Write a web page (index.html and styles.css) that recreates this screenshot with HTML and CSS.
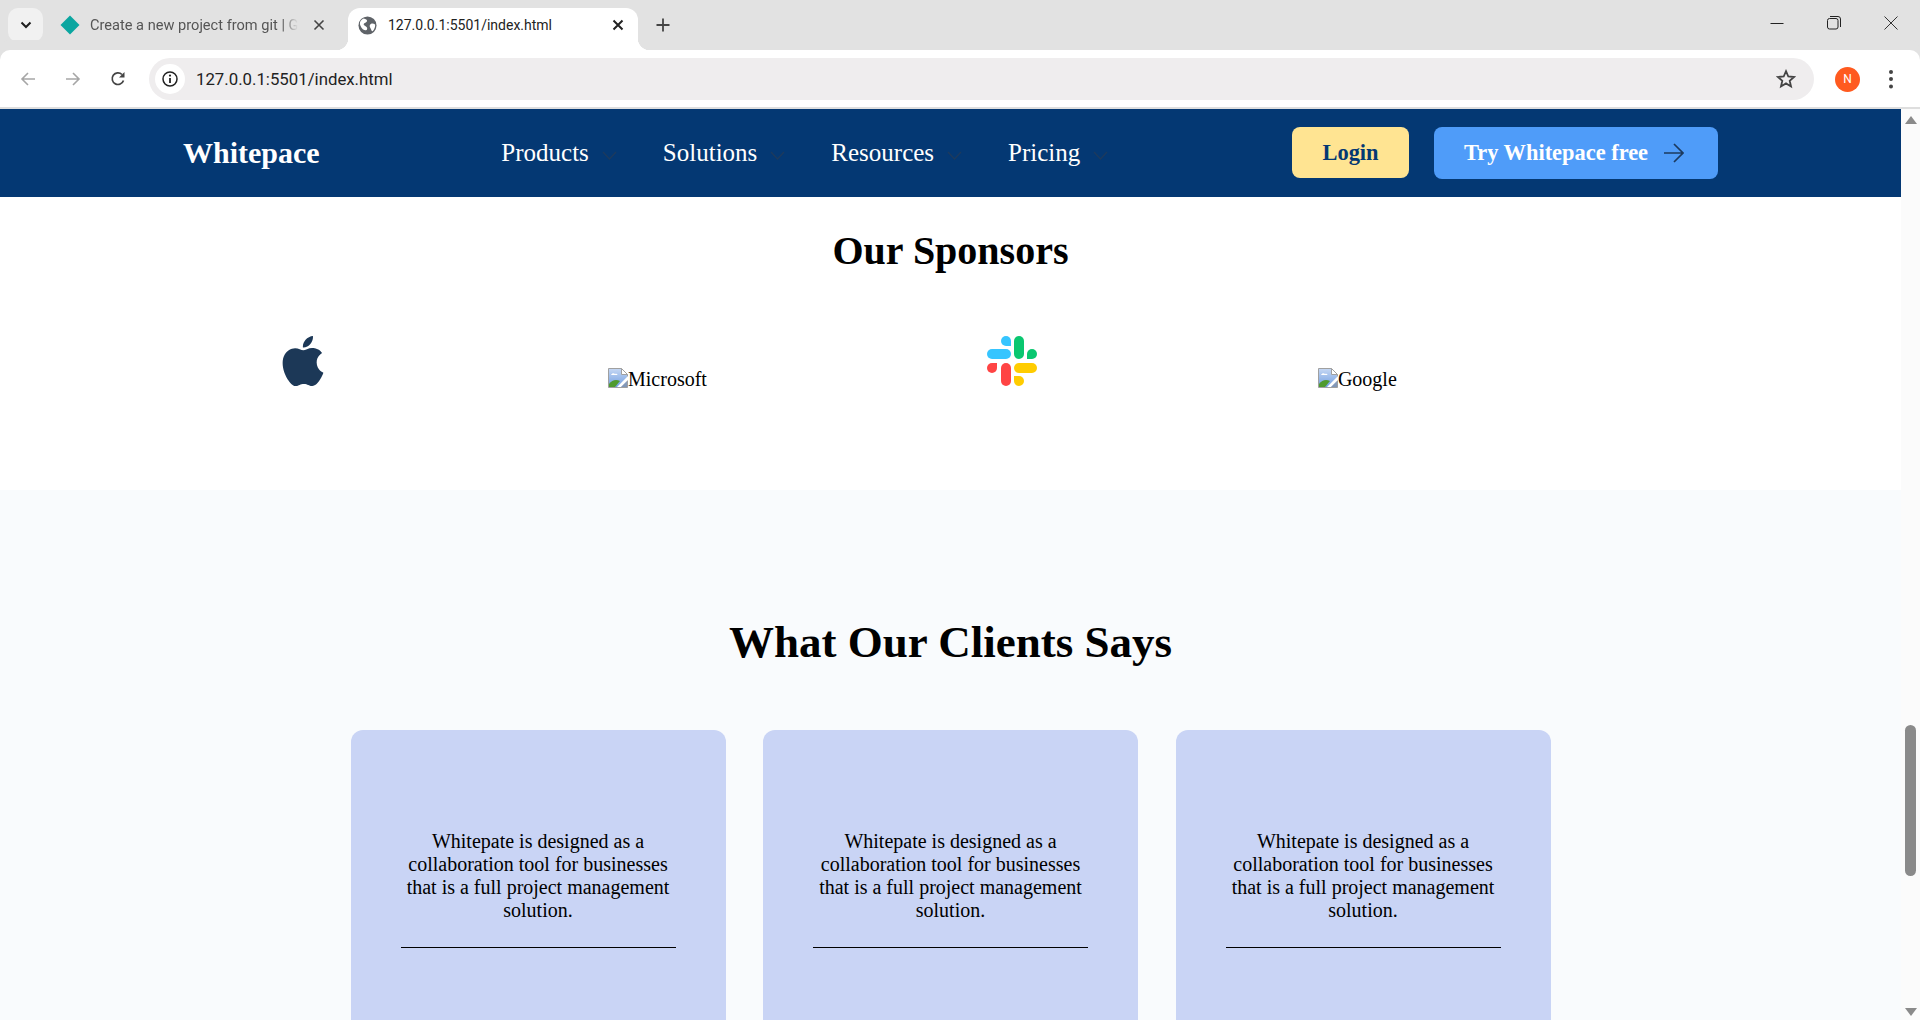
FILE: index.html
```html
<!DOCTYPE html>
<html lang="en">
<head>
    <meta charset="UTF-8">
    <title>Whitepace</title>
    <link rel="stylesheet" href="styles.css">
</head>
<body>
    <div class="tabstrip">
        <div class="tab-search">
            <svg width="12" height="8" viewBox="0 0 12 8"><path d="M1.5 1.5 6 6l4.5-4.5" fill="none" stroke="#1f1f1f" stroke-width="2"/></svg>
        </div>
        <div class="tab">
            <svg class="favicon" width="20" height="20" viewBox="0 0 20 20"><path d="M10 0.5 19.5 10 10 19.5 0.5 10z" fill="#0aa6a0"/></svg>
            <span class="tab-title tab-title-faded">Create a new project from git | G</span>
            <svg class="tab-close" width="12" height="12" viewBox="0 0 12 12"><path d="M1.5 1.5l9 9M10.5 1.5l-9 9" stroke="#444" stroke-width="1.6"/></svg>
        </div>
        <div class="tab tab-active">
            <svg class="favicon" width="19" height="19" viewBox="0 0 20 20"><circle cx="10" cy="10" r="9.5" fill="#5f6368"/><path d="M6 2.5c2 .5 4 1.5 3.5 3S6.5 7 6 8.500 8 10.500 9 11.500s1 3-.5 3.500S4 14 2.500 10 3.500 3.500 6 2.500zM18 9c-1.500-1-3-1.500-4.500-.5s-1.500 2.500-.5 4 1 3 2 3.500 3.500-4 3-7z" fill="#fff"/></svg>
            <span class="tab-title">127.0.0.1:5501/index.html</span>
            <svg class="tab-close" width="12" height="12" viewBox="0 0 12 12"><path d="M1.500 1.500l9 9M10.500 1.500l-9 9" stroke="#222" stroke-width="2"/></svg>
        </div>
        <svg class="new-tab" width="14" height="14" viewBox="0 0 14 14"><path d="M7 0.500v13M0.500 7h13" stroke="#444" stroke-width="1.800"/></svg>
        <div class="win-controls">
            <svg width="14" height="14" viewBox="0 0 14 14"><path d="M0.500 7.500h13" stroke="#222" stroke-width="1"/></svg>
            <svg width="14" height="14" viewBox="0 0 14 14"><rect x="0.500" y="2.500" width="10.500" height="10.500" rx="2" fill="none" stroke="#222"/><path d="M3 0.500h8a2.500 2.500 0 0 1 2.500 2.500v8" fill="none" stroke="#222"/></svg>
            <svg width="14" height="14" viewBox="0 0 14 14"><path d="M0.500 0.500l13 13M13.500 0.500l-13 13" stroke="#333" stroke-width="1"/></svg>
        </div>
    </div>

    <div class="toolbar">
        <svg class="tool-icon" width="16" height="16" viewBox="0 0 16 16"><path d="M15 8H2M8 2 2 8l6 6" fill="none" stroke="#a6a6a6" stroke-width="1.600"/></svg>
        <svg class="tool-icon" width="16" height="16" viewBox="0 0 16 16"><path d="M1 8h13M8 2l6 6-6 6" fill="none" stroke="#a6a6a6" stroke-width="1.600"/></svg>
        <svg class="tool-icon" width="16" height="16" viewBox="0 0 16 16"><path d="M13.500 9.500A5.800 5.800 0 1 1 12 3.500" fill="none" stroke="#444" stroke-width="1.700"/><path d="M14.500 1v5.500H9z" fill="#444"/></svg>
        <div class="omnibox">
            <span class="site-info">
                <svg width="16" height="16" viewBox="0 0 16 16"><circle cx="8" cy="8" r="7" fill="none" stroke="#222" stroke-width="1.500"/><path d="M8 7v5" stroke="#222" stroke-width="1.800"/><circle cx="8" cy="4.600" r="1.100" fill="#222"/></svg>
            </span>
            <span class="url">127.0.0.1:5501/index.html</span>
            <svg class="star" width="20" height="20" viewBox="0 0 20 20"><path d="M10 2.200l2.300 5.300 5.700.5-4.300 3.800 1.300 5.600-5-3-5 3 1.300-5.600L2 8l5.700-.5z" fill="none" stroke="#444" stroke-width="1.800"/></svg>
        </div>
        <span class="avatar">N</span>
        <svg class="kebab" width="6" height="20" viewBox="0 0 6 20"><circle cx="3" cy="3" r="2" fill="#444"/><circle cx="3" cy="10" r="2" fill="#444"/><circle cx="3" cy="17.500" r="2" fill="#444"/></svg>
    </div>

    <div class="viewport">
        <main class="page">
            <header class="navbar">
                <a class="logo">Whitepace</a>
                <nav class="nav-links">
                    <a class="nav-link">Products<svg class="chevron" width="15" height="9" viewBox="0 0 15 9"><path d="M1 1l6.500 7L14 1" fill="none" stroke="#1c3a5e" stroke-width="1.500"/></svg></a>
                    <a class="nav-link">Solutions<svg class="chevron" width="15" height="9" viewBox="0 0 15 9"><path d="M1 1l6.500 7L14 1" fill="none" stroke="#1c3a5e" stroke-width="1.500"/></svg></a>
                    <a class="nav-link">Resources<svg class="chevron" width="15" height="9" viewBox="0 0 15 9"><path d="M1 1l6.500 7L14 1" fill="none" stroke="#1c3a5e" stroke-width="1.500"/></svg></a>
                    <a class="nav-link">Pricing<svg class="chevron" width="15" height="9" viewBox="0 0 15 9"><path d="M1 1l6.500 7L14 1" fill="none" stroke="#1c3a5e" stroke-width="1.500"/></svg></a>
                </nav>
                <div class="nav-actions">
                    <button class="btn btn-login">Login</button>
                    <button class="btn btn-try">Try Whitepace free
                        <svg width="20" height="20" viewBox="0 0 20 20"><path d="M0 10h19M10 1l9 9-9 9" fill="none" stroke="#1c3a5e" stroke-width="1.700"/></svg>
                    </button>
                </div>
            </header>

            <section class="sponsors">
                <h2 class="sponsors-title">Our Sponsors</h2>
                <div class="sponsor-row">
                    <svg class="sponsor-logo" width="50" height="50" viewBox="0 0 24 24"><path fill="#1c3857" d="M12.152 6.896c-.948 0-2.415-1.078-3.960-1.040-2.040.027-3.910 1.183-4.961 3.014-2.117 3.675-.546 9.103 1.519 12.090 1.013 1.454 2.208 3.090 3.792 3.039 1.520-.065 2.090-.987 3.935-.987 1.831 0 2.350.987 3.960.948 1.637-.026 2.676-1.480 3.676-2.948 1.156-1.688 1.636-3.325 1.662-3.415-.039-.013-3.182-1.221-3.220-4.857-.026-3.040 2.480-4.494 2.597-4.559-1.429-2.090-3.623-2.324-4.390-2.376-2-.156-3.675 1.090-4.610 1.090zM15.530 3.830c.843-1.012 1.400-2.427 1.245-3.830-1.207.052-2.662.805-3.532 1.818-.780.896-1.454 2.338-1.273 3.714 1.338.104 2.715-.688 3.559-1.701"/></svg>
                    <span class="sponsor-alt">
                        <svg width="20" height="20" viewBox="0 0 20 20"><use href="#broken-img"/></svg>Microsoft
                    </span>
                    <svg class="sponsor-logo" width="50" height="50" viewBox="0 0 50 50">
                        <rect x="0" y="13" width="24" height="10" rx="5" fill="#36c5ff"/>
                        <path d="M24 10h-5a5 5 0 1 1 5-5z" fill="#36c5ff"/>
                        <rect x="27" y="0" width="10" height="23" rx="5" fill="#0ac770"/>
                        <path d="M40 23v-5a5 5 0 1 1 5 5z" fill="#0ac770"/>
                        <rect x="14" y="27" width="10" height="23" rx="5" fill="#ff4444"/>
                        <path d="M10 27v5a5 5 0 1 1-5-5z" fill="#ff4444"/>
                        <rect x="27" y="27" width="23" height="10" rx="5" fill="#ffcc00"/>
                        <path d="M27 40h5a5 5 0 1 1-5 5z" fill="#ffcc00"/>
                    </svg>
                    <span class="sponsor-alt sponsor-alt-last">
                        <svg width="20" height="20" viewBox="0 0 20 20"><use href="#broken-img"/></svg>Google
                    </span>
                </div>
            </section>

            <section class="clients">
                <h2 class="clients-title">What Our Clients Says</h2>
                <div class="client-grid">
                    <article class="client-card">
                        <p>Whitepate is designed as a collaboration tool for businesses that is a full project management solution.</p>
                        <hr>
                    </article>
                    <article class="client-card">
                        <p>Whitepate is designed as a collaboration tool for businesses that is a full project management solution.</p>
                        <hr>
                    </article>
                    <article class="client-card">
                        <p>Whitepate is designed as a collaboration tool for businesses that is a full project management solution.</p>
                        <hr>
                    </article>
                </div>
            </section>
        </main>

        <div class="scrollbar">
            <span class="arrow-up"></span>
            <span class="thumb"></span>
            <span class="arrow-down"></span>
        </div>
    </div>

    <!-- shared broken image icon -->
    <svg class="defs" width="0" height="0">
        <defs>
            <linearGradient id="sky" x1="0" y1="0" x2="0" y2="1">
                <stop offset="0" stop-color="#c6d8f4"/>
                <stop offset="1" stop-color="#6f9de0"/>
            </linearGradient>
            <g id="broken-img">
                <path d="M0.500 0.500H13.500L19.500 6.500V19.500H0.500z" fill="url(#sky)" stroke="#a0a0a0"/>
                <path d="M13.500 0.500V6.500H19.500z" fill="#fff" stroke="#a0a0a0"/>
                <path d="M3 7c1-2 3-2 4-1 1-.5 2.500 0 2.500 1z" fill="#fff"/>
                <path d="M1 19v-3c3-4 7-5 11-3l-5 6z" fill="#4f9a2e"/>
                <path d="M9 19l11-11v4l-7 7z" fill="#fff"/>
                <path d="M13 19l6-6v6z" fill="#8e8e8e" opacity=".5"/>
            </g>
        </defs>
    </svg>
</body>
</html>
```

FILE: styles.css
```css
* {
    box-sizing: border-box;
}

html, body {
    margin: 0;
    height: 1020px;
    overflow: hidden;
}

body {
    display: flex;
    flex-direction: column;
    background: #fff;
    font-family: "Liberation Serif", serif;
    color: #000;
}

/* browser tabs */
.tabstrip {
    height: 50px;
    flex-shrink: 0;
    display: flex;
    align-items: flex-start;
    padding: 8px 0 0 8px;
    background: #e2e2e2;
    font-family: Roboto, "Noto Sans", sans-serif;
    font-size: 14px;
}

.tab-search {
    width: 35px;
    height: 34px;
    display: flex;
    align-items: center;
    justify-content: center;
    background: #f1f1f1;
    border-radius: 10px;
}

.tab {
    position: relative;
    width: 290px;
    height: 42px;
    padding-left: 17px;
    padding-bottom: 8px;
    display: flex;
    align-items: center;
    color: #555;
}

.tab-search + .tab {
    width: 305px;
    padding-left: 17px;
}

.tab-title {
    margin-left: 10px;
    width: 210px;
    white-space: nowrap;
    overflow: hidden;
}

.tab-title-faded {
    font-size: 14.600px;
    -webkit-mask-image: linear-gradient(to right, #000 192px, transparent 208px);
    mask-image: linear-gradient(to right, #000 192px, transparent 208px);
}

.tab-close {
    margin-left: 13px;
}

.tab-active {
    background: #fff;
    border-radius: 12px 12px 0 0;
    color: #222;
    padding-left: 10px;
}

.tab-active .tab-title {
    width: 214px;
    margin-left: 11px;
}

.tab-active .tab-close {
    margin-left: 10px;
}

.tab-active::before,
.tab-active::after {
    content: "";
    position: absolute;
    bottom: 0;
    width: 12px;
    height: 12px;
}

.tab-active::before {
    left: -12px;
    background: radial-gradient(circle at 0 0, transparent 12px, #fff 12.500px);
}

.tab-active::after {
    right: -12px;
    background: radial-gradient(circle at 100% 0, transparent 12px, #fff 12.500px);
}

.new-tab {
    margin: 10px 0 0 18px;
}

.win-controls {
    margin-left: auto;
    margin-top: 8px;
    display: flex;
    gap: 43px;
    padding-right: 22px;
}

/* browser toolbar */
.toolbar {
    height: 59px;
    flex-shrink: 0;
    display: flex;
    align-items: center;
    padding: 1px 0 0 20px;
    background: #fff;
    border-bottom: 2px solid #dedede;
    border-radius: 10px 10px 0 0;
    font-family: Roboto, "Noto Sans", sans-serif;
    box-shadow: 0 -10px 0 0 #e2e2e2;
}

.tool-icon {
    margin-right: 29px;
}

.omnibox {
    width: 1665px;
    height: 42px;
    margin-left: -6px;
    display: flex;
    align-items: center;
    padding: 0 18px 0 6px;
    background: #efedee;
    border-radius: 21px;
}

.site-info {
    width: 30px;
    height: 30px;
    display: flex;
    align-items: center;
    justify-content: center;
    background: #fff;
    border-radius: 50%;
}

.url {
    margin-left: 11px;
    font-size: 16.800px;
    color: #222;
}

.star {
    margin-left: auto;
}

.avatar {
    width: 25px;
    height: 25px;
    margin-left: 21px;
    display: flex;
    align-items: center;
    justify-content: center;
    background: #ff5a1f;
    color: #fff;
    border-radius: 50%;
    font-size: 12px;
}

.kebab {
    margin-left: 28px;
}

/* page inside the window */
.viewport {
    flex: 1;
    min-height: 0;
    display: flex;
}

.page {
    flex: 1;
    min-width: 0;
    overflow: hidden;
}

.scrollbar {
    width: 19px;
    flex-shrink: 0;
    display: flex;
    flex-direction: column;
    align-items: center;
    padding: 7px 0 4px;
    background: #fbfbfb;
}

.arrow-up {
    width: 0;
    height: 0;
    border-left: 6.500px solid transparent;
    border-right: 6.500px solid transparent;
    border-bottom: 8px solid #8a8a8a;
}

.arrow-down {
    width: 0;
    height: 0;
    margin-top: auto;
    border-left: 6.500px solid transparent;
    border-right: 6.500px solid transparent;
    border-top: 8px solid #8a8a8a;
}

.thumb {
    width: 11px;
    height: 151px;
    margin-top: 601px;
    background: #8a8a8a;
    border-radius: 6px;
}

.navbar {
    height: 88px;
    display: flex;
    align-items: center;
    justify-content: space-between;
    padding: 0 183px;
    background: #043873;
    color: #fff;
}

.logo {
    font-size: 30px;
    font-weight: bold;
}

.nav-links {
    display: flex;
    gap: 46px;
    margin-right: 2px;
}

.nav-link {
    display: flex;
    align-items: center;
    font-size: 25px;
}

.chevron {
    margin: 4px 0 0 13px;
}

.nav-actions {
    display: flex;
    align-items: center;
    gap: 25px;
}

.btn {
    display: flex;
    align-items: center;
    border: none;
    border-radius: 8px;
    font-family: "Liberation Serif", serif;
    font-size: 22.400px;
    font-weight: bold;
}

.btn-login {
    height: 51px;
    width: 117px;
    margin-top: -1px;
    justify-content: center;
    background: #ffe492;
    color: #043873;
}

.btn-try {
    height: 52px;
    width: 284px;
    padding: 0 0 0 30px;
    gap: 16px;
    background: #4f9cf9;
    color: #fff;
}

.sponsors {
    height: 293px;
    padding-top: 30px;
    background: #fff;
}

.sponsors-title {
    margin: 0 0 62px;
    font-size: 40px;
    text-align: center;
}

.sponsor-row {
    display: flex;
    align-items: flex-start;
    gap: 280px;
    padding-left: 278px;
}

.sponsor-alt {
    display: flex;
    align-items: flex-start;
    margin-top: 32px;
    font-size: 20px;
}

.sponsor-alt-last {
    margin-left: 1px;
}

.clients {
    padding-top: 126px;
    background: #f9fbfd;
    height: 600px;
}

.clients-title {
    margin: 0 0 62px;
    font-size: 45px;
    text-align: center;
}

.client-grid {
    width: 1200px;
    margin: 0 auto;
    display: grid;
    grid-template-columns: repeat(3, 1fr);
    gap: 37.500px;
}

.client-card {
    height: 400px;
    padding: 100px 50px 0;
    background: #c9d4f5;
    border-radius: 12px;
    font-size: 20px;
    text-align: center;
}

.client-card p {
    margin: 0 0 25px;
}

.client-card hr {
    margin: 0;
    border: none;
    border-top: 1px solid #000;
}

.defs {
    position: absolute;
}
```
